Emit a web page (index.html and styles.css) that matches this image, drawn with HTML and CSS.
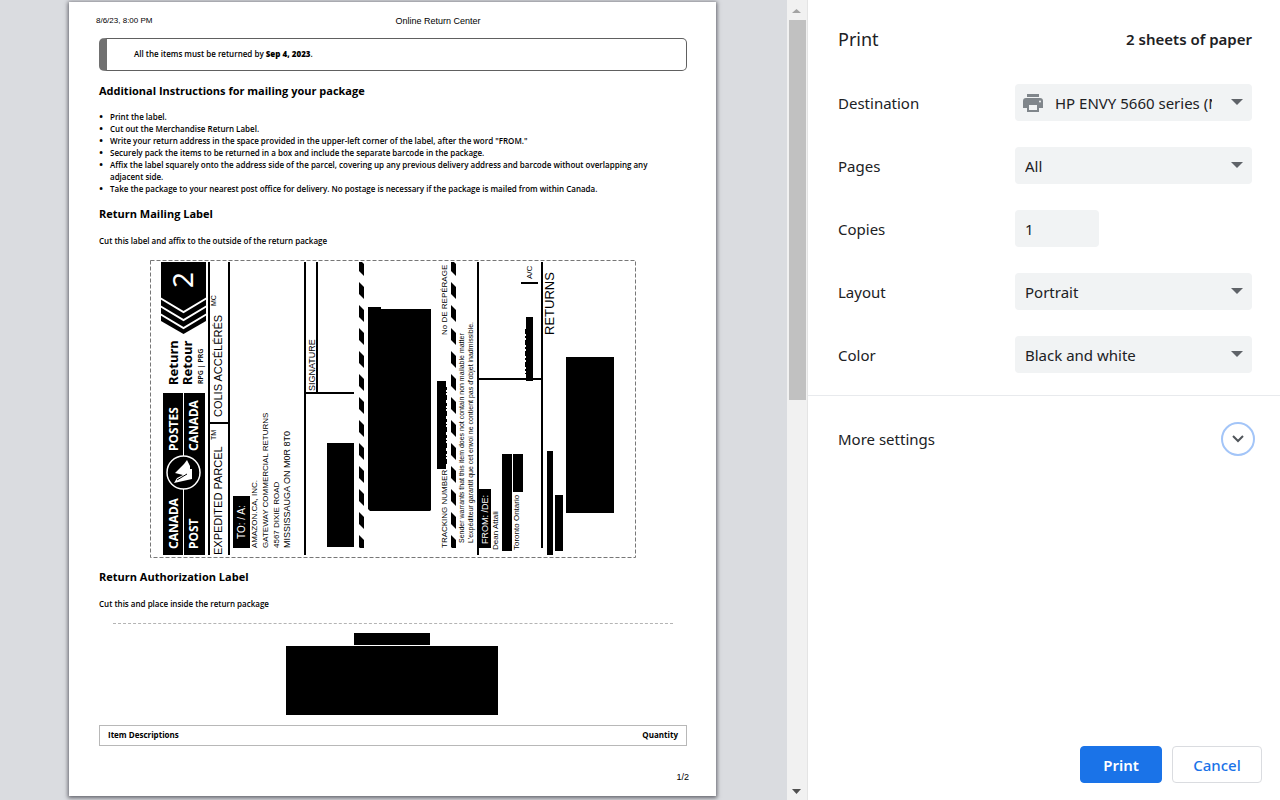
FILE: index.html
```html
<!DOCTYPE html>
<html lang="en">
<head>
<meta charset="utf-8">
<title>Print</title>
<link rel="stylesheet" href="styles.css">
</head>
<body>
<div class="dialog">
  <main class="preview">
    <article class="sheet">
      <header class="sheet-head"><span>8/6/23, 8:00 PM</span><span class="sheet-title">Online Return Center</span><span></span></header>
      <div class="sheet-body">
        <p class="notice">All the items must be returned by <b>Sep 4, 2023</b>.</p>
        <h2>Additional Instructions for mailing your package</h2>
        <ul class="steps">
          <li>Print the label.</li>
          <li>Cut out the Merchandise Return Label.</li>
          <li>Write your return address in the space provided in the upper-left corner of the label, after the word "FROM."</li>
          <li>Securely pack the items to be returned in a box and include the separate barcode in the package.</li>
          <li>Affix the label squarely onto the address side of the parcel, covering up any previous delivery address and barcode without overlapping any adjacent side.</li>
          <li>Take the package to your nearest post office for delivery. No postage is necessary if the package is mailed from within Canada.</li>
        </ul>
        <h2 class="label-heading">Return Mailing Label</h2>
        <p class="hint">Cut this label and affix to the outside of the return package</p>
        <svg class="label" viewBox="150 260 486 298" role="img" aria-label="Mailing label">
          <defs>
            <pattern id="candy" x="359" y="259" width="92" height="23" patternUnits="userSpaceOnUse">
              <path d="M0 0L5 5V17L0 12Z"/>
            </pattern>
          </defs>
          <rect x="150.5" y="260.5" width="485" height="297" fill="none" stroke="#777" stroke-dasharray="4 2"/>
          <!-- priority badge -->
          <path d="M161 262H206V321L183.500 334L161 321Z"/>
          <path d="M160 298L183.500 312L207 298M160 306L183.500 320L207 306M160 314L183.500 328L207 314" fill="none" stroke="#fff" stroke-width="2"/>
          <g class="humanist">
            <text class="t28 inverse" transform="translate(193 288) rotate(-90)">2</text>
            <text class="t13 strong" transform="translate(178 385) rotate(-90)">Return</text>
            <text class="t13 strong" transform="translate(192 385) rotate(-90)">Retour</text>
            <text class="t7 semi" transform="translate(203 384) rotate(-90)">RPG | PRG</text>
          </g>
          <!-- carrier logo -->
          <rect x="163" y="393" width="42" height="162"/>
          <path d="M183.500 393V555" stroke="#fff" stroke-width="1"/>
          <circle cx="183.500" cy="472.500" r="16.500" stroke="#fff" stroke-width="1.500"/>
          <path d="M175 473L184 464L187 460L190 466V469H192V479L174 483L177 478L183 475Z" fill="#fff"/>
          <path d="M177 480L187 474" stroke="#000" fill="none"/>
          <g class="humanist strong t12 inverse">
            <text transform="translate(178 549) rotate(-90)">CANADA</text>
            <text transform="translate(198 549) rotate(-90)">POST</text>
            <text transform="translate(178 451) rotate(-90)">POSTES</text>
            <text transform="translate(198 451) rotate(-90)">CANADA</text>
          </g>
          <!-- rules -->
          <path d="M209 262V555M229 262V555M209 423H229M305 262V555M317 262V393M305 393H354M478 262V555M478 379H542M542 262V548M521 283H538" fill="none" stroke="#000" stroke-width="2"/>
          <g class="t11">
            <text transform="translate(222 555) rotate(-90)">EXPEDITED PARCEL</text>
            <text transform="translate(222 417) rotate(-90)">COLIS ACCÉLÉRÉS</text>
          </g>
          <g class="t7">
            <text transform="translate(216 440) rotate(-90)">TM</text>
            <text transform="translate(216 306) rotate(-90)">MC</text>
          </g>
          <!-- recipient -->
          <rect x="233" y="496" width="17" height="52"/>
          <text class="t10 inverse" transform="translate(245 539) rotate(-90)">TO: / A:</text>
          <g class="t8">
            <text transform="translate(257 548) rotate(-90)">AMAZON.CA, INC.</text>
            <text transform="translate(268 548) rotate(-90)">GATEWAY COMMERCIAL RETURNS</text>
            <text transform="translate(279 548) rotate(-90)">4567 DIXIE ROAD</text>
          </g>
          <text class="t9" transform="translate(290 548) rotate(-90)">MISSISSAUGA ON M0R 8T0</text>
          <text class="t9" transform="translate(315 391) rotate(-90)">SIGNATURE</text>
          <rect x="327" y="443" width="27" height="104"/>
          <!-- barcode area -->
          <rect x="359" y="262" width="5" height="286" fill="url(#candy)"/>
          <rect x="451" y="262" width="5" height="286" fill="url(#candy)"/>
          <path d="M368 307H381V309H431V510L430 511H370L368 509Z"/>
          <path d="M437 381H446V469H437Z"/>
          <path d="M446.500 387V465" stroke="#000" stroke-dasharray="3 2 1 2 5 3"/>
          <g class="t8">
            <text transform="translate(447 335) rotate(-90)">No DE REPÉRAGE</text>
            <text transform="translate(447 548) rotate(-90)">TRACKING NUMBER</text>
          </g>
          <g class="t7">
            <text transform="translate(464 543) rotate(-90)">Sender warrants that this item does not contain non mailable matter</text>
            <text transform="translate(473 543) rotate(-90)">L'expéditeur garantit que cet envoi ne contient pas d'objet inadmissible.</text>
          </g>
          <!-- sender -->
          <rect x="478" y="489" width="13" height="59"/>
          <text class="t9 inverse" transform="translate(488 544) rotate(-90)">FROM: /DE:</text>
          <g class="t8">
            <text transform="translate(498 550) rotate(-90)">Dean Attali</text>
            <text transform="translate(519 550) rotate(-90)">Toronto Ontario</text>
            <text transform="translate(532 279) rotate(-90)">A/C</text>
          </g>
          <path d="M502 454H512V551H502ZM513 454H523V492H513ZM526 317H533V381H526ZM547 451H553V555H547ZM555 495H563V551H555ZM566 357H614V513H566Z"/>
          <path d="M525.500 329V374" stroke="#000" stroke-dasharray="5 2 2 2"/>
          <text class="t13" transform="translate(554 335) rotate(-90)">RETURNS</text>
        </svg>
        <h2 class="label-heading">Return Authorization Label</h2>
        <p class="hint">Cut this and place inside the return package</p>
        <div class="cut-line"></div>
        <div class="code"><div class="code-caption"></div><div class="code-bars"></div></div>
        <table class="items"><tr><th scope="col">Item Descriptions</th><th scope="col" class="qty">Quantity</th></tr></table>
      </div>
      <footer class="sheet-foot">1/2</footer>
    </article>
  </main>
  <div class="scrollbar" aria-hidden="true">
    <svg class="arrow" viewBox="0 0 20 20"><path d="M5 13L9.500 9L14 13Z" fill="#a3a3a3"/></svg>
    <div class="track"><div class="thumb"></div></div>
    <svg class="arrow" viewBox="0 0 20 20"><path d="M5 9H14L9.500 14Z" fill="#505050"/></svg>
  </div>
  <form class="panel">
    <header class="panel-head"><h1>Print</h1><span class="count">2 sheets of paper</span></header>
    <div class="fields">
      <div class="field"><label for="destination">Destination</label>
        <div class="control has-icon">
          <svg class="printer" viewBox="0 0 22 20"><path fill="#80868b" d="M5 1H17V4H5ZM4 5H18Q21 5 21 8V15H17V11H5V15H1V8Q1 5 4 5ZM5 11H17V19H5ZM7 12V17H15V12Z" fill-rule="evenodd"/><circle cx="18" cy="8.500" r="1" fill="#f1f3f4"/></svg>
          <select id="destination"><option>HP ENVY 5660 series (Network)</option></select>
        </div></div>
      <div class="field"><label for="pages">Pages</label><div class="control"><select id="pages"><option>All</option></select></div></div>
      <div class="field"><label for="copies">Copies</label><div class="control short"><input id="copies" type="text" value="1"></div></div>
      <div class="field"><label for="layout">Layout</label><div class="control"><select id="layout"><option>Portrait</option></select></div></div>
      <div class="field"><label for="color">Color</label><div class="control"><select id="color"><option>Black and white</option></select></div></div>
    </div>
    <div class="more"><span id="more-label">More settings</span>
      <button type="button" class="expand" aria-labelledby="more-label"><svg viewBox="0 0 14 10"><path d="M2 2L7 7L12 2" fill="none" stroke="#50555a" stroke-width="2"/></svg></button></div>
    <div class="actions"><button type="submit" class="btn primary">Print</button><button type="button" class="btn">Cancel</button></div>
  </form>
</div>
</body>
</html>
```

FILE: styles.css
```css
* { box-sizing: border-box; }
body { margin: 0; font-family: "Noto Sans", sans-serif; color: #202124; }
h1, h2, p, ul { margin: 0; padding: 0; }
.dialog { display: flex; height: 100vh; background: #fff; }

.preview { flex: 1; min-width: 0; overflow: hidden; background: #dadce0; padding: 2px 2px 0 0; }
.sheet {
  display: flex; flex-direction: column; max-width: 647px; min-height: calc(100% - 4px);
  margin: 0 auto; padding: 13px 29px 13px 30px; background: #fff; color: #000;
  box-shadow: 0 1px 4px 1px rgba(60, 60, 70, .75);
  font-family: "Open Sans", sans-serif; font-size: 8px; line-height: 12px; font-weight: 600;
}
.sheet-head { display: grid; grid-template-columns: 10fr auto 7fr; margin: 0 -3px; font-family: "Liberation Sans", sans-serif; font-weight: 400; }
.sheet-title { font-size: 9px; }
.sheet-body { display: flex; flex-direction: column; }
.notice { margin-top: 11px; padding: 9px 0 10px 27px; border: 1px solid #606060; border-left: 8px solid #707070; border-radius: 5px; }
h2 { margin-top: 12px; font-size: 11px; line-height: 16px; font-weight: 700; }
.steps { margin-top: 12px; padding: 0 20px 0 11px; list-style: none; }
.steps li::before { content: "•"; float: left; width: 11px; margin-left: -11px; font-size: 11px; }
.label-heading { margin-top: 11px; }
.hint { margin: 13px 0; }
.label { display: block; width: 100%; max-width: 486px; align-self: center; font-family: "Liberation Sans", sans-serif; font-weight: 400; }
.humanist { font-family: "Noto Sans", sans-serif; }
.strong { font-weight: 700; }
.semi { font-weight: 600; }
.inverse { fill: #fff; }
.t7 { font-size: 7px; }
.t8 { font-size: 8px; }
.t9 { font-size: 9px; }
.t10 { font-size: 10px; }
.t11 { font-size: 11px; }
.t12 { font-size: 12px; }
.t13 { font-size: 13px; }
.t28 { font-size: 28px; }
.cut-line { margin: 0 14px; border-top: 1px dashed #b4b4b4; }
.code { display: flex; flex-direction: column; align-items: center; gap: 1px; margin-top: 9px; padding-right: 2px; }
.code-caption { width: 76px; height: 12px; background: #000; }
.code-bars { width: 212px; height: 69px; background: #000; }
.items { width: 100%; margin-top: 10px; border: 1px solid #b8b8b8; border-spacing: 0; }
.items th { padding: 3px 8px 4px; text-align: left; font-weight: 700; }
.items .qty { text-align: right; }
.sheet-foot { margin: auto -2px 0; text-align: right; font-family: "Liberation Sans", sans-serif; font-size: 9px; font-weight: 400; }

.scrollbar { display: flex; flex-direction: column; flex: none; width: 21px; padding: 0 2px; background: #f1f1f1; border-right: 1px solid #e4e4e4; }
.arrow { display: block; width: 20px; height: 20px; margin-left: -2px; }
.track { flex: 1; }
.thumb { height: 50%; width: 17px; background: #c1c1c1; }

.panel { display: flex; flex-direction: column; flex: none; width: 472px; font-size: 15px; line-height: 20px; }
.panel-head { display: flex; justify-content: space-between; align-items: center; padding: 26px 28px 0 30px; }
h1 { font-size: 18px; line-height: 26px; font-weight: 400; }
.count { font-weight: 600; }
.fields { display: flex; flex-direction: column; gap: 26px; padding: 32px 28px 22px 30px; border-bottom: 1px solid #e8eaed; }
.field { display: flex; justify-content: space-between; align-items: center; }
.control { position: relative; width: 237px; display: flex; }
.control select, .control input {
  appearance: none; width: 100%; height: 37px; border: 0; border-radius: 4px; background: #f1f3f4;
  font: inherit; color: #202124; padding: 0 40px 0 10px;
}
.control:has(select)::after {
  content: ""; position: absolute; right: 9px; top: 15px; border: 6px solid transparent; border-top-color: #5f6368; border-bottom: 0; pointer-events: none;
}
.control.short { width: 84px; margin-right: 153px; }
.control.short input { padding-right: 10px; }
.control.has-icon select { padding-left: 40px; }
.printer { position: absolute; left: 7px; top: 9px; width: 22px; height: 20px; }
.more { display: flex; justify-content: space-between; align-items: center; padding: 26px 25px 0 30px; }
.expand { display: grid; place-items: center; width: 34px; height: 34px; padding: 0; border: 2px solid #a3c5f8; border-radius: 50%; background: #fff; }
.expand svg { width: 14px; height: 10px; }
.actions { display: flex; justify-content: flex-end; gap: 10px; margin-top: auto; padding: 0 18px 17px; }
.btn { height: 37px; min-width: 90px; border: 1px solid #dadce0; border-radius: 4px; background: #fff; color: #1a73e8; font: inherit; font-weight: 500; }
.primary { min-width: 82px; border-color: #1a73e8; background: #1a73e8; color: #fff; font-weight: 600; }
```
